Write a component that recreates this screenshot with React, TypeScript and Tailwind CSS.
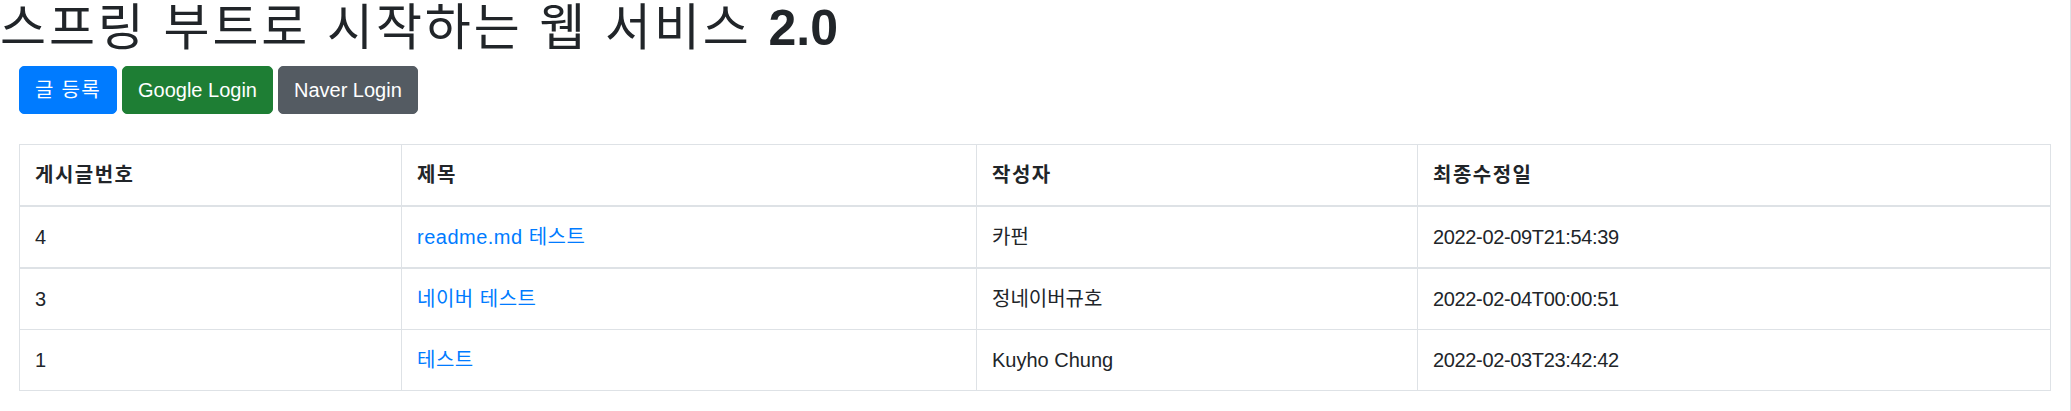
const FONT = "font-['Liberation_Sans','Noto_Sans_CJK_KR',sans-serif]";

const POSTS = [
  { id: 4, title: "readme.md 테스트", author: "카펀", modified: "2022-02-09T21:54:39" },
  { id: 3, title: "네이버 테스트", author: "정네이버규호", modified: "2022-02-04T00:00:51" },
  { id: 1, title: "테스트", author: "Kuyho Chung", modified: "2022-02-03T23:42:42" },
];

export default function App() {
  return (
    <div className={`${FONT} h-[411px] w-full border-r border-[#dee2e6] bg-white text-[20px] leading-[30px] text-[#212529]`}>
      <h1 className="mb-[10px] text-[50px] font-normal leading-[56px]">
        <span className="tracking-[2.9px]">스프링 부트로 시작하는 웹 서비스 </span>
        <span className="font-semibold">2.0</span>
      </h1>

      <div className="px-[19px]">
        {/* Buttons */}
        <div className="flex gap-[5px]">
          <a className="rounded-[5px] border border-[#007bff] bg-[#007bff] px-[15px] py-[8px] tracking-[1.3px] text-white">글 등록</a>
          <a className="rounded-[5px] border border-[#1e7e34] bg-[#1e7e34] px-[15px] py-[8px] text-white">Google Login</a>
          <a className="rounded-[5px] border border-[#545b62] bg-[#545b62] px-[15px] py-[8px] text-white">Naver Login</a>
        </div>

        {/* Posts table */}
        <table className="mt-[30px] w-full table-fixed border-collapse border border-[#dee2e6]">
          <colgroup>
            <col className="w-[382px]" />
            <col className="w-[575px]" />
            <col className="w-[441px]" />
            <col />
          </colgroup>
          <thead>
            <tr className="border-b-2 border-[#dee2e6] tracking-[1.5px]">
              <th className="border border-[#dee2e6] p-[15px] text-left font-bold">게시글번호</th>
              <th className="border border-[#dee2e6] p-[15px] text-left font-bold">제목</th>
              <th className="border border-[#dee2e6] p-[15px] text-left font-bold">작성자</th>
              <th className="border border-[#dee2e6] p-[15px] text-left font-bold">최종수정일</th>
            </tr>
          </thead>
          <tbody>
            {POSTS.map((post, i) => (
              <tr key={post.id} className={i === 0 ? "border-b-2 border-[#dee2e6]" : "border-b border-[#dee2e6]"}>
                <td className="border-x border-[#dee2e6] p-[15px]">{post.id}</td>
                <td className="border-x border-[#dee2e6] p-[15px]">
                  <a className="tracking-[0.5px] text-[#007bff]">{post.title}</a>
                </td>
                <td className="border-x border-[#dee2e6] p-[15px]">{post.author}</td>
                <td className="border-x border-[#dee2e6] p-[15px] tracking-[-0.35px]">{post.modified}</td>
              </tr>
            ))}
          </tbody>
        </table>
      </div>
    </div>
  );
}
